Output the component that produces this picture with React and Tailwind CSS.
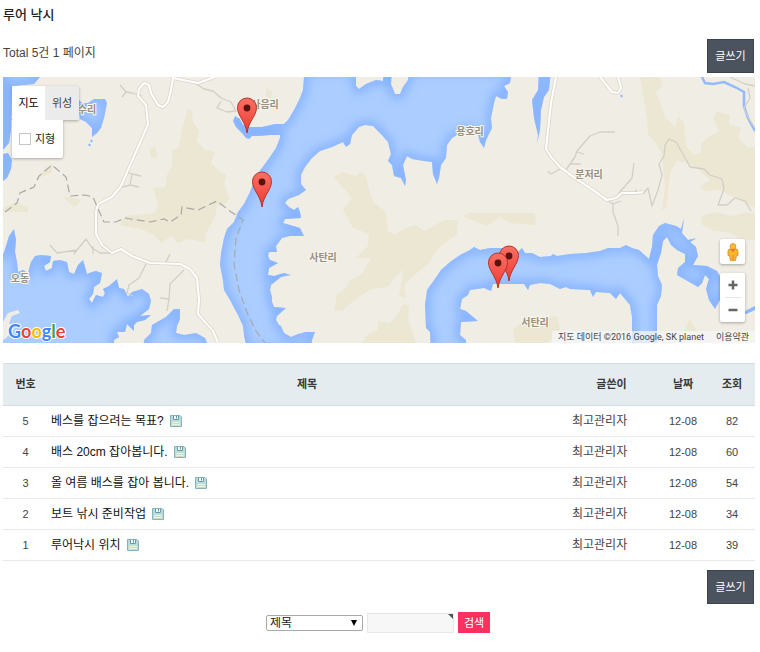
import React, { useState } from 'react';

const posts = [
  { no: 5, title: '베스를 잡으려는 목표?', author: '최고관리자', date: '12-08', views: 82 },
  { no: 4, title: '배스 20cm 잡아봅니다.', author: '최고관리자', date: '12-08', views: 60 },
  { no: 3, title: '올 여름 배스를 잡아 봅니다.', author: '최고관리자', date: '12-08', views: 54 },
  { no: 2, title: '보트 낚시 준비작업', author: '최고관리자', date: '12-08', views: 34 },
  { no: 1, title: '루어낙시 위치', author: '최고관리자', date: '12-08', views: 39 },
];

const places = [
  { name: '수리', x: 87, y: 113 },
  { name: '사음리', x: 265, y: 108 },
  { name: '용호리', x: 470, y: 135 },
  { name: '분저리', x: 589, y: 178 },
  { name: '사탄리', x: 323, y: 261 },
  { name: '서탄리', x: 535, y: 326 },
  { name: '오동', x: 20, y: 282 },
];

// tip of each marker
const pins = [
  [247, 133],
  [262, 207],
  [509, 281],
  [498, 288],
];

const water = [
  // main lake
  'M304 70V77L303 90L300 98L294 110L288 120L284 124L275 124L262 127L250 127L243 125L240 119L235 116L233 121L236 127L242 133L246 138L249 139L252 136L259 136L270 135L280 135L280 138L276 148L270 157L262 168L256 176L250 192L244 204L238 212L234 222L227 229L224 238L221 253L220 265L223 280L224 290L230 300L238 315L243 326L244 335L247 350H311L312 340L315 332L306 332L298 334L291 337L284 333L281 326L279 325L276 320L277 316L286 308L274 307L272 302L272 297L270 290L271 285L281 277L291 275L284 273L274 276L268 275L269 268L278 263L270 260L268 256L269 252L277 252L276 246L282 238L290 236L304 236L300 228L290 225L283 223L285 219L301 218L300 212L298 207L294 210L289 207L285 203L288 199L299 195L306 190L301 184L301 175L305 167L312 158L320 151L332 147L343 142L346 147L350 144L352 135L359 127L365 125L373 126L380 133L388 142L391 154L388 161L392 165L394 176L401 178L405 186L406 180L403 165L407 156L412 159L424 161L432 162L433 174L437 184L439 178L441 165L446 158L447 145L452 138L460 133L470 130L478 134L480 142L484 148L486 140L492 128L491 118L494 103L496 96L502 99L507 99L508 92L504 86L510 83L512 70H409L408 80L403 87L400 94L395 94L391 84L392 70H384L383 81L376 80L366 84L359 89L356 86V70Z',
  'M539 70L538 90L532 100L534 118L538 135L537 144L540 130L541 110L544 97L549 90L551 70Z',
  'M3 70H43L40 77L34 84L12 86L11 130L9 143L3 150Z',
  'M3 154L8 153L12 160L11 169L7 178L3 181Z',
  'M78 99L82 103L88 103L94 99L105 99L107 103L104 118L101 128L97 133L92 137L92 128L86 122L80 119Z',
  // left bay
  'M-8 255H3L6 246L9 236L14 229L16 240L15 252L17 262L18 272L23 270L28 273L31 262L35 256L41 255L51 256L50 262L44 266L46 271L52 268L53 261L60 260L67 262L69 272L74 274L78 265L83 260L87 274L92 272L96 271L102 273L100 283L94 287L93 294L89 299L92 303L96 295L103 297L105 293L103 289L109 286L117 279L119 288L124 289L128 297L132 292L142 289L149 294L151 301L149 309L140 316L151 315L145 320L137 322L134 325L134 331L127 324L125 332L117 332L119 337L114 340L115 355H-8Z',
  'M143 355L144 340L151 333L152 325L166 317L174 309L180 309L180 319L177 326L176 333L184 335L196 333L205 338L212 355Z',
  // southern lake
  'M431 355L430 332L426 328L425 305L427 290L437 276L441 270L450 262L460 255L470 250L474 247L480 250L490 248L504 248L518 252L522 248L525 253L532 253L540 257L551 256L553 254L557 256L570 254L586 253L600 251L608 248L620 248L626 245L632 248L639 250L649 259L652 247L653 235L659 226L665 223L676 226L681 229L684 218L682 233L688 240L697 238L690 242L696 247L698 256L693 265L707 266L717 271L724 283L722 296L715 309L709 300L706 289L709 279L705 275L702 283L698 287L684 279L677 275L678 268L685 262L685 254L677 250L671 245L667 237L663 241L661 253L657 265L658 276L662 285L661 296L657 305L657 355H632L632 317L630 305L625 299L620 293L616 299L610 293L596 292L593 297L590 290L570 289L566 287L560 289L550 284L540 283L530 285L528 290L524 284L504 284L493 284L491 291L484 288L470 290L468 295L462 299L460 309L466 311L478 321L461 322L460 335L466 340L466 355Z',
  'M742 314L747 310L755 306V310L746 314Z',
];

const greens = [
  'M188 108L192 112L193 122L199 131L197 141L205 150L215 152L211 163L219 171L226 175L224 184L230 199L222 206L217 205L215 217L206 233L205 242L188 239L178 243L171 236L161 243L154 235L141 229L119 225L126 216L155 213L158 203L153 188L165 187L167 175L172 165L172 151L179 147L182 130Z',
  'M150 148L156 147L157 157L151 158Z',
  'M43 171L52 163L52 173L38 178Z M62 196L70 197L82 200L74 207Z',
  'M266 88L272 92L271 99L266 96Z',
  'M334 177L342 172L348 174L356 176L361 172L366 176L369 190L373 202L386 212L388 232L396 234L405 228L416 225L424 231L444 220L458 220L457 234L438 248L428 264L412 277L404 285L406 298L399 296L404 269L396 276L388 287L371 289L352 302L343 310L334 311L337 294L345 289L350 280L362 274L371 258L356 258L368 246L369 234L353 228L343 210L352 198Z',
  'M362 343L366 336L378 329L378 321L390 323L397 315L403 304L409 306L408 320L413 333L416 343Z',
  'M640 77H660L662 87L656 92L661 105L665 117L675 127L678 116L684 123L686 146L694 155L701 152L701 143L710 136L719 131L713 118L717 112L730 115L729 124L741 128L738 138L748 148L755 147V208L737 199L720 190L705 191L700 186L710 180L698 169L688 163L677 161L670 173L666 208L662 210L665 187L662 154L655 142L648 134L647 118Z',
  'M3 208L16 202L28 207V212H3Z M468 213H535L536 225L521 224L509 223L500 217L487 226L477 222L462 216Z',
  'M513 330L521 323L537 320L557 316L560 329L548 343H515Z M690 318L697 332H684Z',
  'M702 216L715 212L731 216L745 213H755V240L741 239L728 232L714 231L701 224Z',
];

const majorRoads = [
  'M215 77L198 83L173 78L171 90L168 102L163 107L158 105L151 93L149 85L144 83L139 89L138 96L146 105L148 124L139 145L121 186L112 197L98 204L96 212V234L102 245L112 253L121 249L132 256L150 263L180 264L190 269L197 278L199 300L198 314L213 331L218 343',
  'M556 77L551 103L546 149L552 158L560 167L575 178L590 188L607 200L616 198L622 193L636 193L643 192',
  'M600 77L612 92L618 93L621 88L618 77',
];

const minorRoads = [
  'M120 85L126 92L132 93L142 96M126 92L122 97M193 82L204 89L213 91L221 98L231 102L236 111L227 112L217 108L221 101',
  'M126 172L132 174L141 176M132 174L130 185L139 187M130 185L119 188',
  'M50 245L57 253L77 250L86 239L92 248L100 253L110 253M93 246V254M77 250L74 254',
  'M146 264L139 278L129 285L127 293L133 296M184 270L170 284L169 299L160 298M169 299L167 311M166 262L170 254',
  'M565 171L575 157L577 151L590 136L600 132L615 132M577 152L584 154M570 164H581M560 169L551 174L548 171M619 193L632 178L634 163',
  'M636 195V189M643 194L648 188L652 206L658 190L662 175L659 164L664 156L665 145L669 139L676 142L683 154L690 167L704 169L710 175L722 179L724 189L718 205L727 205L735 198L745 201L751 211M607 200L613 204L621 201M613 204V212M613 212L618 226L618 236',
  'M730 77L745 84L755 86M748 88L750 98L744 108L749 119L755 128',
];

const borders = [
  'M5 212L17 203L20 193L34 187L39 176L52 165L66 177L70 196L85 195L93 197L98 209L104 222L116 222L125 218L150 222L164 219L170 222L181 215L182 207L198 210L217 201L231 212L239 217L243 220L236 238L234 264L239 290L248 315L256 331L265 343',
];

const Pin = ({ x, y }) => (
  <g transform={`translate(${x} ${y})`}>
    <path
      d="M0 0C-1.500 -12 -9.500 -17 -9.500 -25.500A9.500 9.500 0 0 1 9.500 -25.500C9.500 -17 1.500 -12 0 0Z"
      fill="url(#pinFill)"
      stroke="#b5332b"
      strokeWidth="1"
    />
    <circle cx="0" cy="-25" r="3.400" fill="#5b1310" />
  </g>
);

const MapCanvas = () => (
  <svg
    viewBox="3 77 752 266"
    preserveAspectRatio="xMidYMid slice"
    className="block h-full w-full"
    role="img"
    aria-label="지도"
  >
    <defs>
      <clipPath id="waterClip">
        {water.map((d) => <path key={d} d={d} />)}
      </clipPath>
      <filter id="shore" x="-5%" y="-5%" width="110%" height="110%">
        <feGaussianBlur stdDeviation="5" />
      </filter>
      <linearGradient id="pinFill" x1="0" y1="0" x2="0" y2="1">
        <stop offset="0" stopColor="#fb7064" />
        <stop offset="1" stopColor="#ee3b31" />
      </linearGradient>
    </defs>
    <rect x="3" y="77" width="752" height="266" fill="#f0ede5" />
    <g fill="#ebe7d2">
      {greens.map((d) => <path key={d} d={d} />)}
    </g>
    <g clipPath="url(#waterClip)">
      <rect x="3" y="77" width="752" height="266" fill="#abcdff" />
      <g fill="none" stroke="#86b2ff" strokeWidth="9" filter="url(#shore)">
        {water.map((d) => <path key={d} d={d} />)}
      </g>
    </g>
    {/* small islands and ponds */}
    <path d="M3 322L8 313L18 310L20 313L12 316L9 323L14 329L6 338L3 340Z" fill="#f0ede5" />
    <path d="M89 144L90 146M91 140L92 142M621 95L622 97M291 193L292 194" stroke="#8ab5ff" strokeWidth="2" />
    <path d="M702 77L705 83L713 84L724 82L735 87L744 92L744 106L748 118L755 131" fill="none" stroke="#92bbff" strokeWidth="2.500" />
    <g fill="none" strokeLinejoin="round" stroke="#d3cfc8" strokeWidth="1.300">
      {minorRoads.map((d) => <path key={d} d={d} />)}
    </g>
    <g fill="none" strokeLinejoin="round" stroke="#d8d4cd" strokeWidth="3.600">
      {majorRoads.map((d) => <path key={d} d={d} />)}
    </g>
    <g fill="none" strokeLinejoin="round" stroke="#fffefa" strokeWidth="2.200">
      {majorRoads.map((d) => <path key={d} d={d} />)}
    </g>
    <g fill="none" stroke="#a9a8a8" strokeWidth="1.200" strokeDasharray="8 4">
      {borders.map((d) => <path key={d} d={d} />)}
    </g>
    <g
      className="text-[10px] font-bold"
      textAnchor="middle"
      fill="#979080"
      stroke="#f7f5ef"
      strokeWidth="2"
      paintOrder="stroke"
    >
      {places.map((p) => <text key={p.name} x={p.x} y={p.y}>{p.name}</text>)}
    </g>
    {pins.map(([x, y]) => <Pin key={x} x={x} y={y} />)}
  </svg>
);

const Pegman = () => (
  <svg viewBox="0 0 12 18" className="h-[18px] w-3" aria-hidden="true">
    <path d="M3 6H9Q11 6 11 8V12.500H9.500L8.500 17.500H3.500L2.500 12.500H1V8Q1 6 3 6Z" fill="#f7b62c" stroke="#d98c1b" strokeWidth=".8" />
    <path d="M3.500 6L6 9L8.500 6Z" fill="#e8632b" />
    <path d="M6 12V17" stroke="#d98c1b" />
    <circle cx="6" cy="3.500" r="2.900" fill="#f9bd3c" stroke="#d98c1b" strokeWidth=".8" />
  </svg>
);

const LakeMap = () => {
  const [type, setType] = useState('map');
  const active = 'bg-white text-black';
  const idle = 'bg-[#ebebeb] text-[#444]';

  return (
    <div className="relative h-[266px] overflow-hidden">
      <MapCanvas />

      {/* Map type */}
      <div className="absolute left-[9px] top-[9px] text-[11px]">
        <div className="flex rounded-xs shadow-[0_1px_3px_rgba(0,0,0,0.3)]">
          <button type="button" onClick={() => setType('map')} className={`h-[34px] w-[33px] rounded-l-xs ${type === 'map' ? active : idle}`}>지도</button>
          <button type="button" onClick={() => setType('satellite')} className={`h-[34px] w-[34px] rounded-r-xs ${type === 'satellite' ? active : idle}`}>위성</button>
        </div>
        <label className="flex h-[38px] w-[51px] items-center gap-1 rounded-b-xs bg-white pl-[7px] text-[#222] shadow-[0_1px_3px_rgba(0,0,0,0.3)]">
          <input type="checkbox" className="h-3 w-3 appearance-none border border-[#c6c6c6] bg-white checked:bg-gray-500" />
          지형
        </label>
      </div>

      {/* Street view and zoom */}
      <div className="absolute right-[10px] top-[162px] flex flex-col gap-[9px]">
        <button type="button" aria-label="스트리트 뷰" className="flex h-[25px] w-[25px] items-center justify-center rounded-xs bg-white shadow-[0_1px_3px_rgba(0,0,0,0.3)]">
          <Pegman />
        </button>
        <div className="flex flex-col items-center rounded-xs bg-white shadow-[0_1px_3px_rgba(0,0,0,0.3)]">
          <button type="button" aria-label="확대" className="flex h-6 w-[25px] items-center justify-center">
            <svg viewBox="0 0 10 10" className="h-[10px] w-[10px]"><path d="M5 0.500V9.500M0.500 5H9.500" stroke="#666" strokeWidth="2.500" /></svg>
          </button>
          <div className="h-px w-4 bg-[#e6e6e6]"></div>
          <button type="button" aria-label="축소" className="flex h-6 w-[25px] items-center justify-center">
            <svg viewBox="0 0 10 10" className="h-[10px] w-[10px]"><path d="M0.500 5H9.500" stroke="#666" strokeWidth="2.500" /></svg>
          </button>
        </div>
      </div>

      <a
        href="#google"
        className="absolute bottom-0 left-[5px] flex font-['Lato',sans-serif] text-[18px] leading-6 font-bold [paint-order:stroke] [-webkit-text-stroke:2px_white]"
      >
        <span className="text-[#4285f4]">G</span>
        <span className="text-[#ea4335]">o</span>
        <span className="text-[#fbbc05]">o</span>
        <span className="text-[#4285f4]">g</span>
        <span className="text-[#34a853]">l</span>
        <span className="text-[#ea4335]">e</span>
      </a>

      <div className="absolute bottom-0 right-0 flex gap-3 bg-[#f5f5f5]/75 px-[6px] font-['Roboto','Noto_Sans_CJK_KR',sans-serif] text-[9px] leading-3 text-[#444]">
        <span>지도 데이터 ©2016 Google, SK planet</span>
        <a href="#terms">이용약관</a>
      </div>
    </div>
  );
};

const FloppyIcon = () => (
  <svg viewBox="0 0 12 12" className="h-3 w-3" aria-hidden="true">
    <path d="M.5 .5H10L11.500 2V11.500H.5Z" fill="#b9dcde" stroke="#86b3b7" />
    <path d="M3 1H9V5H3Z" fill="#f2f8f7" />
    <path d="M3.500 1V4.500H8.500V1M6.500 1V3.500" stroke="#6799a0" fill="none" />
    <path d="M2.500 7H9.500V11H2.500Z" fill="#f3f6df" />
    <path d="M3 8.500H9M3 10.500H9" stroke="#b9d5b9" strokeWidth=".8" />
  </svg>
);

const WriteButton = () => (
  <a href="#write" className="mr-px flex h-[34px] w-[47px] items-center justify-center border border-[#3c434c] bg-[#4b545e] text-[11px] text-white">
    글쓰기
  </a>
);

const SearchForm = () => (
  <form className="mt-2 flex items-center justify-center gap-1 pr-[2px]" onSubmit={(e) => e.preventDefault()}>
    <div className="relative flex">
      <select aria-label="검색대상" className="h-4 w-[97px] appearance-none rounded-xs border border-[#a9a9a9] bg-white pl-[3px] text-xs leading-3 text-[#222]">
        <option>제목</option>
        <option>내용</option>
        <option>글쓴이</option>
      </select>
      <svg viewBox="0 0 6 6" className="pointer-events-none absolute right-[6px] top-[5px] h-[6px] w-[6px]"><path d="M0 0H6L3 6Z" /></svg>
    </div>
    <div className="relative flex">
      <input type="text" aria-label="검색어" required className="h-5 w-[87px] border border-[#e4eaec] bg-[#f7f7f7] px-1 text-xs outline-none" />
      <svg viewBox="0 0 5 5" className="pointer-events-none absolute right-px top-px h-[5px] w-[5px]"><path d="M0 0H5V5Z" fill="#4f574c" /></svg>
    </div>
    <button type="submit" className="h-[21px] w-8 bg-[#ff3061] text-[11px] leading-4 text-white">검색</button>
  </form>
);

const App = () => {
  return (
    <main className="min-h-screen bg-white pl-[3px] pr-[5px] pt-[3px] font-['Liberation_Sans','Noto_Sans_CJK_KR',sans-serif] text-xs text-[#444]">
      <h1 className="text-[13px] leading-6 font-medium text-[#222]">루어 낙시</h1>

      <div className="mt-3 flex items-start justify-between">
        <p className="leading-7">Total 5건 1 페이지</p>
        <WriteButton />
      </div>

      <div className="mt-1">
        <LakeMap />
      </div>

      <table className="mt-5 w-full table-fixed border-collapse text-center">
        <thead>
          <tr className="h-[42px] border-y border-[#d1dee2] bg-[#e5ecef] text-[11px] text-[#383838]">
            <th scope="col" className="w-[45px]">번호</th>
            <th scope="col">제목</th>
            <th scope="col" className="w-[91px]">글쓴이</th>
            <th scope="col" className="w-[52px]">날짜</th>
            <th scope="col" className="w-[46px]">조회</th>
          </tr>
        </thead>
        <tbody>
          {posts.map((post) => (
            <tr key={post.no} className="h-[31px] border-b border-[#e9e9e9]">
              <td className="text-[11px]">{post.no}</td>
              <td className="pl-[3px] text-left">
                <a href={`#post-${post.no}`} className="flex items-center gap-[6px] text-[#111]">
                  {post.title}
                  <FloppyIcon />
                </a>
              </td>
              <td className="pl-[6px] text-left">{post.author}</td>
              <td className="text-[11px]">{post.date}</td>
              <td className="text-[11px]">{post.views}</td>
            </tr>
          ))}
        </tbody>
      </table>

      <div className="mt-[9px] flex justify-end">
        <WriteButton />
      </div>

      <SearchForm />
    </main>
  );
};

export default App;
